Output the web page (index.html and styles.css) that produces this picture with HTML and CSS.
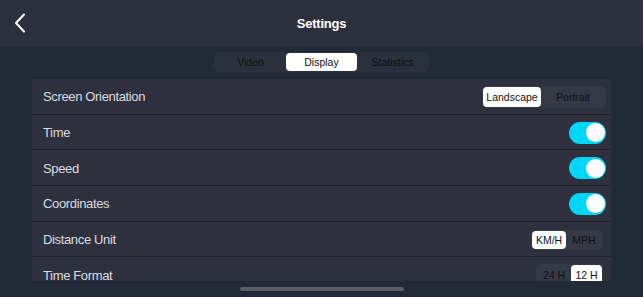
FILE: index.html
```html
<!DOCTYPE html>
<html>
<head>
<meta charset="utf-8">
<link rel="stylesheet" href="styles.css">
</head>
<body>
<div class="screen">
  <header class="topbar">
    <div class="back">
      <svg width="14" height="20" viewBox="0 0 14 20"><path d="M11 1.5 L3 10 L11 18.5" fill="none" stroke="#ffffff" stroke-width="2" stroke-linecap="round" stroke-linejoin="round"/></svg>
    </div>
    <div class="title">Settings</div>
    <div></div>
  </header>
  <div class="tabs-wrap">
    <div class="tabs">
      <div class="tab">Video</div>
      <div class="tab active">Display</div>
      <div class="tab">Statistics</div>
    </div>
  </div>
  <div class="panel">
    <div class="row">
      <span class="label">Screen Orientation</span>
      <div class="seg seg-orient">
        <div class="opt on">Landscape</div>
        <div class="opt">Portrait</div>
      </div>
    </div>
    <div class="row">
      <span class="label">Time</span>
      <div class="toggle"><div class="knob"></div></div>
    </div>
    <div class="row">
      <span class="label">Speed</span>
      <div class="toggle"><div class="knob"></div></div>
    </div>
    <div class="row">
      <span class="label">Coordinates</span>
      <div class="toggle"><div class="knob"></div></div>
    </div>
    <div class="row">
      <span class="label">Distance Unit</span>
      <div class="seg seg-unit">
        <div class="opt on">KM/H</div>
        <div class="opt">MPH</div>
      </div>
    </div>
    <div class="row">
      <span class="label">Time Format</span>
      <div class="seg seg-time">
        <div class="opt">24 H</div>
        <div class="opt on">12 H</div>
      </div>
    </div>
  </div>
  <div class="home-indicator"></div>
</div>
</body>
</html>
```
FILE: styles.css
```css
html, body {
  margin: 0;
  padding: 0;
}
body {
  background: #222a38;
  font-family: "Liberation Sans", Arial, sans-serif;
  width: 643px;
  height: 297px;
  overflow: hidden;
}
.screen {
  display: flex;
  flex-direction: column;
  height: 297px;
}
.topbar {
  height: 46px;
  background: #2c303c;
  display: grid;
  grid-template-columns: 46px 1fr 46px;
  align-items: center;
}
.back {
  display: flex;
  align-items: center;
  padding-left: 13px;
}
.title {
  text-align: center;
  color: #ffffff;
  font-weight: bold;
  font-size: 13px;
  letter-spacing: -0.2px;
}
.tabs-wrap {
  display: flex;
  justify-content: center;
  padding-top: 6px;
}
.tabs {
  display: flex;
  width: 213px;
  height: 18px;
  padding: 1px;
  background: #2b303d;
  border-radius: 5px;
}
.tab {
  flex: 1;
  display: flex;
  align-items: center;
  justify-content: center;
  font-size: 10.5px;
  color: #0d0f14;
  border-radius: 4px;
}
.tab.active {
  background: #ffffff;
  color: #111111;
}
.panel {
  margin: 7px 32px 0;
  height: 202px;
  background: #2e313d;
  overflow: hidden;
}
.row {
  box-sizing: border-box;
  height: 35.7px;
  border-bottom: 1px solid #1e222b;
  display: flex;
  align-items: center;
  justify-content: space-between;
  padding: 1px 5px 0 11px;
}
.label {
  color: #d9dce2;
  font-size: 13px;
  letter-spacing: -0.35px;
}
.seg {
  display: flex;
  padding: 1px;
  border-radius: 5px;
  background: #353845;
}
.opt {
  display: flex;
  align-items: center;
  justify-content: center;
  height: 20px;
  font-size: 10.5px;
  color: #101218;
  border-radius: 4px;
}
.opt.on {
  background: #ffffff;
}
.seg-orient .opt:first-child { width: 58px; }
.seg-orient .opt:last-child { width: 64px; }
.seg-unit { margin-right: 3px; }
.seg-unit .opt { height: 18px; }
.seg-unit .opt:first-child { width: 34px; }
.seg-unit .opt:last-child { width: 36px; }
.seg-time { margin-right: 3px; }
.seg-time .opt { height: 20px; }
.seg-time .opt:first-child { width: 34px; }
.seg-time .opt:last-child { width: 31px; }
.toggle {
  width: 37px;
  height: 22px;
  border-radius: 11px;
  background: #00d6f7;
  display: flex;
  align-items: center;
  justify-content: flex-end;
  padding: 0 1.5px;
  box-sizing: border-box;
}
.knob {
  width: 19px;
  height: 19px;
  border-radius: 50%;
  background: #ffffff;
}
.home-indicator {
  align-self: center;
  margin-top: 6px;
  width: 164px;
  height: 4px;
  border-radius: 2px;
  background: #5a5d63;
}
```
